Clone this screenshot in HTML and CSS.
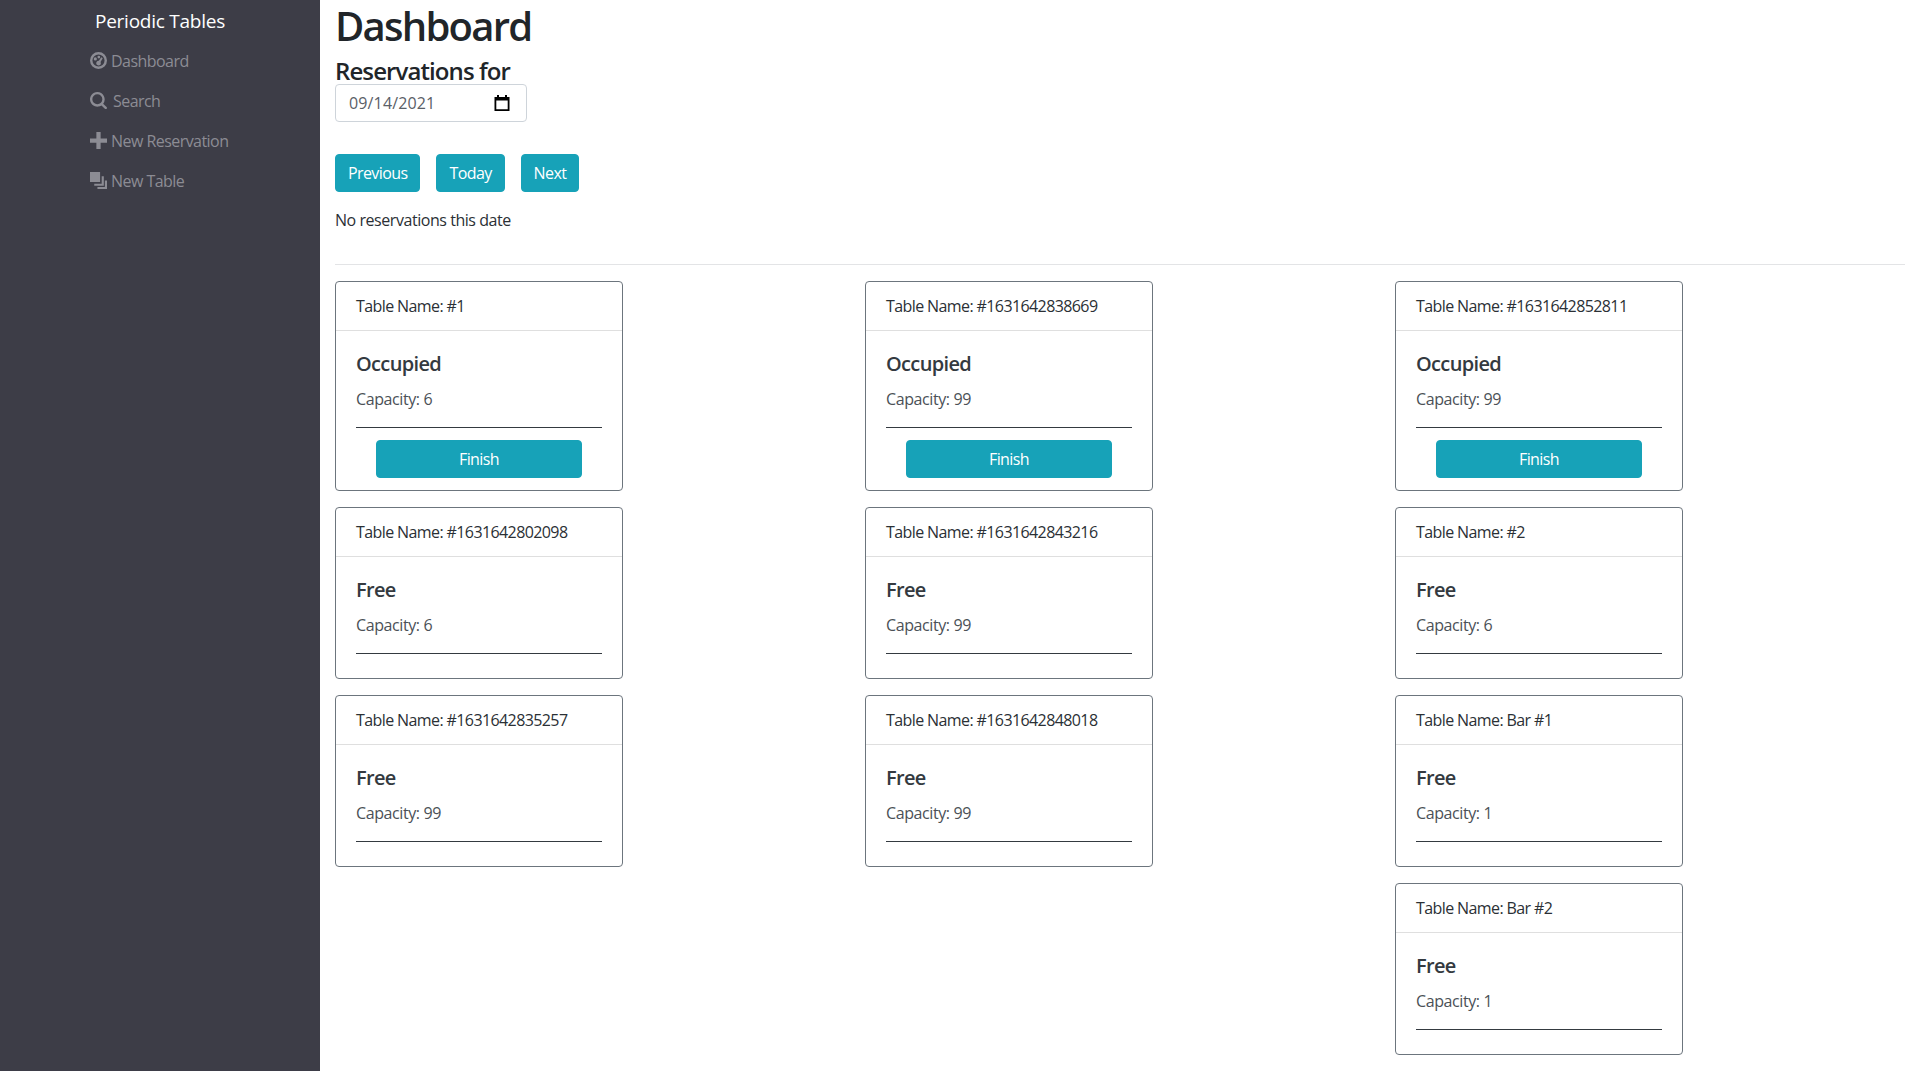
FILE: index.html
```html
<!DOCTYPE html>
<html lang="en">
<head>
<meta charset="utf-8">
<title>Periodic Tables</title>
<link rel="stylesheet" href="styles.css">
</head>
<body>
<div class="app">
  <nav class="sidebar">
    <div class="brand">Periodic Tables</div>
    <ul class="nav">
      <li class="nav-item"><svg class="icon" viewBox="0 0 16 16"><path fill-rule="evenodd" d="M8 0a8 8 0 1 1 0 16A8 8 0 0 1 8 0zm0 2.300a5.700 5.700 0 1 0 0 11.400A5.700 5.700 0 0 0 8 2.300zM5 5a1.500 1.500 0 1 1 0 3 1.500 1.500 0 0 1 0-3zm3.300-1.500a1.300 1.300 0 1 1 0 2.600 1.300 1.300 0 0 1 0-2.600zm3.700 2.400L9.900 9.300a2.200 2.200 0 1 1-1.600-1L10.600 4.900z"/></svg><span>Dashboard</span></li>
      <li class="nav-item"><svg class="icon" viewBox="0 0 16 16"><path fill-rule="evenodd" d="M6.900 0a6.900 6.900 0 0 1 5.500 11l3.200 3.200a1.100 1.100 0 0 1-1.600 1.600L10.800 12.600A6.900 6.900 0 1 1 6.900 0zm0 2.200a4.700 4.700 0 1 0 0 9.400 4.700 4.700 0 0 0 0-9.400z"/></svg><span class="search-label">Search</span></li>
      <li class="nav-item"><svg class="icon" viewBox="0 0 16 16"><path d="M6 0h4v6h6v4h-6v6H6v-6H0V6h6z"/></svg><span>New Reservation</span></li>
      <li class="nav-item"><svg class="icon" viewBox="0 0 16 16"><path d="M0 0h9.500v9.500H0zM11 4h2v9H4v-2h7zM14 8h2v8H7v-2h7z"/></svg><span>New Table</span></li>
    </ul>
  </nav>
  <main class="main">
    <h1 class="title">Dashboard</h1>
    <h4 class="subtitle">Reservations for</h4>
    <div class="date-input"><span>09/14/2021</span><svg class="cal" viewBox="0 0 16 16"><path fill-rule="evenodd" d="M3 0h2v2h6V0h2v2h2.500v14H.500V2H3zM2.300 5.500v8.700h11.400V5.500z"/></svg></div>
    <div class="btn-row">
      <button class="btn">Previous</button>
      <button class="btn">Today</button>
      <button class="btn">Next</button>
    </div>
    <p class="empty">No reservations this date</p>
    <hr class="rule">
    <div class="columns">
      <div class="column">
        <section class="card"><header class="card-head">Table Name: #1</header><div class="card-body"><h5 class="status">Occupied</h5><p class="capacity">Capacity: 6</p><div class="line"></div><button class="btn finish">Finish</button></div></section>
        <section class="card"><header class="card-head">Table Name: #1631642802098</header><div class="card-body"><h5 class="status">Free</h5><p class="capacity">Capacity: 6</p><div class="line"></div></div></section>
        <section class="card"><header class="card-head">Table Name: #1631642835257</header><div class="card-body"><h5 class="status">Free</h5><p class="capacity">Capacity: 99</p><div class="line"></div></div></section>
      </div>
      <div class="column">
        <section class="card"><header class="card-head">Table Name: #1631642838669</header><div class="card-body"><h5 class="status">Occupied</h5><p class="capacity">Capacity: 99</p><div class="line"></div><button class="btn finish">Finish</button></div></section>
        <section class="card"><header class="card-head">Table Name: #1631642843216</header><div class="card-body"><h5 class="status">Free</h5><p class="capacity">Capacity: 99</p><div class="line"></div></div></section>
        <section class="card"><header class="card-head">Table Name: #1631642848018</header><div class="card-body"><h5 class="status">Free</h5><p class="capacity">Capacity: 99</p><div class="line"></div></div></section>
      </div>
      <div class="column">
        <section class="card"><header class="card-head">Table Name: #1631642852811</header><div class="card-body"><h5 class="status">Occupied</h5><p class="capacity">Capacity: 99</p><div class="line"></div><button class="btn finish">Finish</button></div></section>
        <section class="card"><header class="card-head">Table Name: #2</header><div class="card-body"><h5 class="status">Free</h5><p class="capacity">Capacity: 6</p><div class="line"></div></div></section>
        <section class="card"><header class="card-head">Table Name: Bar #1</header><div class="card-body"><h5 class="status">Free</h5><p class="capacity">Capacity: 1</p><div class="line"></div></div></section>
        <section class="card"><header class="card-head">Table Name: Bar #2</header><div class="card-body"><h5 class="status">Free</h5><p class="capacity">Capacity: 1</p><div class="line"></div></div></section>
      </div>
    </div>
  </main>
</div>
</body>
</html>
```
FILE: styles.css
```css
* { box-sizing: border-box; }
html, body { margin: 0; padding: 0; background: #fff; }
body { font-family: "Open Sans", "Noto Sans", sans-serif; font-size: 16px; line-height: 24px; color: #2b3035; letter-spacing: -0.4px; }
.app { display: flex; align-items: stretch; height: 1071px; }
.sidebar { flex: 0 0 320px; background: #3d3d47; padding: 8px 0 0 90px; }
.brand { color: #fff; font-size: 19px; line-height: 26px; padding-left: 5px; height: 32px; letter-spacing: -0.25px; }
.nav { list-style: none; margin: 1px 0 0; padding: 0; }
.nav-item { display: flex; align-items: center; gap: 4px; height: 40px; color: #8c8c94; font-size: 16px; letter-spacing: -0.55px; }
.icon { width: 17px; height: 17px; fill: #8c8c94; flex: none; position: relative; top: -1px; }
.search-label { margin-left: 2px; }
.main { flex: 1; padding: 0 15px; min-width: 0; }
.title { margin: 0; padding-top: 2px; font-size: 40px; font-weight: 600; line-height: 48px; height: 55px; letter-spacing: -1.75px; color: #212529; }
.subtitle { margin: 0; font-size: 24px; font-weight: 600; line-height: 32px; height: 29px; letter-spacing: -0.9px; color: #212529; }
.date-input { width: 192px; height: 38px; border: 1px solid #ced4da; border-radius: 4px; padding: 0 16px 0 13px; display: flex; align-items: center; justify-content: space-between; color: #5a6067; font-size: 16px; letter-spacing: 0.15px; }
.cal { width: 16px; height: 16px; fill: #000; }
.btn-row { display: flex; gap: 16px; margin-top: 32px; }
.btn { font: inherit; letter-spacing: -0.6px; height: 38px; padding: 0 12px; color: #fff; background: #17a2b8; border: 1px solid #17a2b8; border-radius: 4px; }
.empty { margin: 16px 0 0; height: 24px; letter-spacing: -0.45px; }
.rule { margin: 32px 0 16px; border: 0; border-top: 1px solid #e3e4e6; }
.columns { display: grid; grid-template-columns: repeat(3, 530px); }
.column { display: flex; flex-direction: column; gap: 16px; }
.card { width: 288px; border: 1px solid #6c757d; border-radius: 4px; background: #fff; }
.card-head { height: 49px; padding: 12px 20px; border-bottom: 1px solid #dfdfdf; letter-spacing: -0.6px; }
.card-body { padding: 20px; }
.status { margin: 1px 0 11px; font-size: 20px; font-weight: 600; line-height: 24px; letter-spacing: -0.65px; color: #343a40; }
.capacity { margin: 0; height: 24px; color: #4b5157; }
.line { margin: 16px 0 4px; border-top: 1px solid #343a40; }
.finish { display: block; width: 206px; margin: 12px auto -8px; }
```
